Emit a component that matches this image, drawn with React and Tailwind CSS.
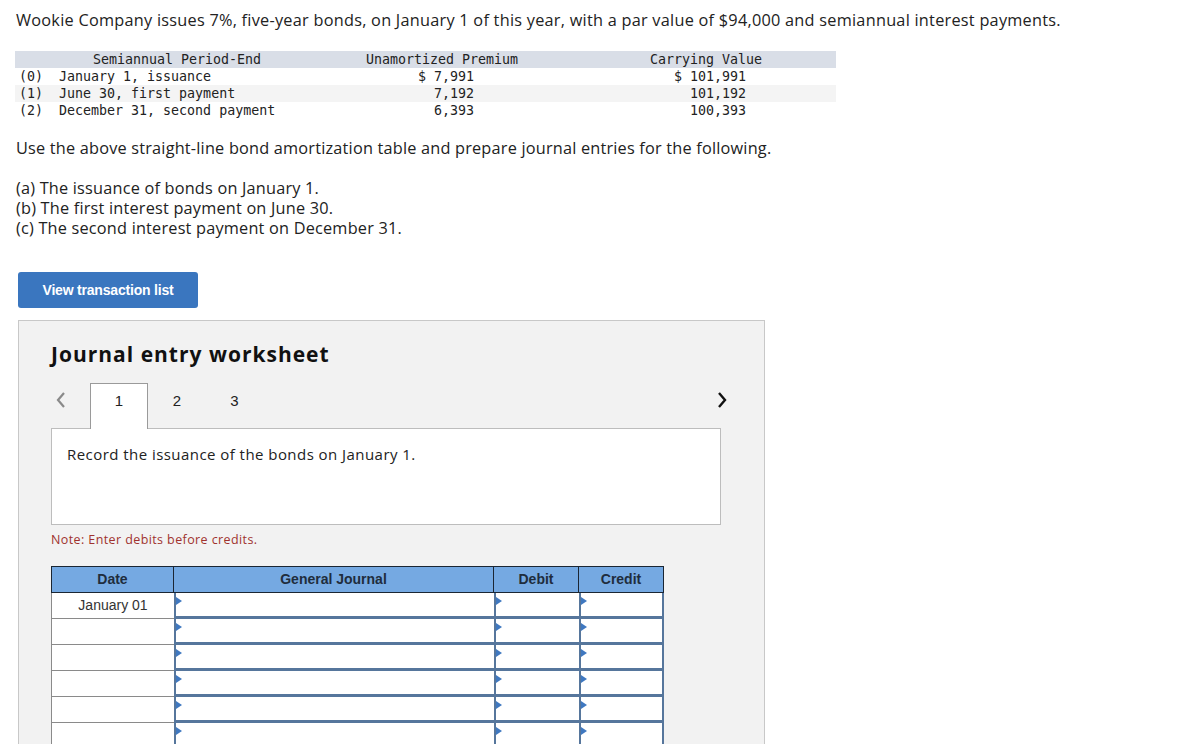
import React from "react";

const amortRows = [
  { label: "(0)  January 1, issuance", premium: "$ 7,991", carrying: "$ 101,991", bg: "bg-white" },
  { label: "(1)  June 30, first payment", premium: "7,192", carrying: "101,192", bg: "bg-[#f4f4f4]" },
  { label: "(2)  December 31, second payment", premium: "6,393", carrying: "100,393", bg: "bg-white" },
];

function Marker() {
  return (
    <span className="absolute left-0 top-[4px] w-0 h-0 border-y-[4px] border-y-transparent border-l-[6px] border-l-[#3f78c0]" />
  );
}

function InputCell({ width, last }) {
  return (
    <div
      className={`relative ${width} h-full bg-white border-l-2 border-b-[3px] border-[#56769c] ${
        last ? "border-r-2" : ""
      }`}
    >
      <Marker />
    </div>
  );
}

export default function App() {
  const rows = ["January 01", "", "", "", "", "", ""];

  return (
    <div className="min-h-[900px] bg-white pl-[16px] pt-[8px] text-[#222]">
      <p className="font-['Open_Sans',sans-serif] text-[16.3px] tracking-[0.25px] leading-[24px]">
        Wookie Company issues 7%, five-year bonds, on January 1 of this year, with a par value of
        $94,000 and semiannual interest payments.
      </p>

      {/* amortization table */}
      <div className="mt-[19px] -ml-px w-[821px] font-['DejaVu_Sans_Mono',monospace] text-[13.3px] leading-[17px] text-[#222] whitespace-pre">
        <div className="flex h-[17px] bg-[#d9dee7]">
          <div className="w-[324px] text-center">Semiannual Period-End</div>
          <div className="w-[206px] text-center">Unamortized Premium</div>
          <div className="w-[291px] pl-[105px]">Carrying Value</div>
        </div>
        {amortRows.map((r, i) => (
          <div key={i} className={`flex h-[17px] ${r.bg}`}>
            <div className="w-[324px] pl-[4px]">{r.label}</div>
            <div className="w-[206px] pr-[71px] text-right">{r.premium}</div>
            <div className="w-[291px] pr-[90px] text-right">{r.carrying}</div>
          </div>
        ))}
      </div>

      <p className="mt-[19px] font-['Open_Sans',sans-serif] text-[16.3px] tracking-[0.2px] leading-[20px]">
        Use the above straight-line bond amortization table and prepare journal entries for the
        following.
      </p>

      <div className="mt-[20px] font-['Open_Sans',sans-serif] text-[16.3px] tracking-[0.2px] leading-[20px]">
        <p>(a) The issuance of bonds on January 1.</p>
        <p>(b) The first interest payment on June 30.</p>
        <p>(c) The second interest payment on December 31.</p>
      </div>

      <button className="mt-[34px] ml-[2px] flex h-[36px] w-[180px] items-center justify-center rounded-[3px] bg-[#3a76bf] font-['Liberation_Sans',sans-serif] text-[14px] font-bold tracking-[-0.2px] text-white">
        View transaction list
      </button>

      {/* worksheet panel */}
      <div className="mt-[12px] ml-[2px] w-[747px] border border-[#c8c8c8] bg-[#f2f2f2] pl-[32px] pr-[20px] pt-[21px] pb-[40px]">
        <h2 className="font-['Open_Sans',sans-serif] text-[21px] tracking-[1px] font-bold leading-[24px] text-[#111]">
          Journal entry worksheet
        </h2>

        <div className="mt-[17px] flex h-[46px] items-start font-['Liberation_Sans',sans-serif] text-[15px] text-[#222]">
          <div className="flex h-[34px] w-[39px] items-center pl-[4px]">
            <svg width="12" height="18" viewBox="0 0 12 18">
              <path d="M9 2 L3 9 L9 16" fill="none" stroke="#8a8a8a" strokeWidth="2.2" />
            </svg>
          </div>
          <div className="relative z-10 h-[46px] w-[58px] border-x border-t border-[#9a9a9a] bg-white pt-[7px] text-center leading-[20px]">
            1
          </div>
          <div className="w-[58px] pt-[8px] text-center leading-[20px]">2</div>
          <div className="w-[57px] pt-[8px] text-center leading-[20px]">3</div>
          <div className="ml-auto flex h-[34px] w-[20px] items-center mr-[8px]">
            <svg width="12" height="18" viewBox="0 0 12 18">
              <path d="M3 2 L9 9 L3 16" fill="none" stroke="#111" strokeWidth="2.4" />
            </svg>
          </div>
        </div>

        <div className="-mt-px h-[97px] w-[670px] border border-[#bdbdbd] bg-white pl-[15px] pt-[15px] font-['Open_Sans',sans-serif] text-[15px] tracking-[0.45px] leading-[20px] text-[#222]">
          Record the issuance of the bonds on January 1.
        </div>

        <p className="mt-[7px] font-['Open_Sans',sans-serif] text-[12.5px] tracking-[0.4px] leading-[16px] text-[#a0322e]">
          Note: Enter debits before credits.
        </p>

        {/* journal table */}
        <div className="mt-[18px] w-[613px] font-['Liberation_Sans',sans-serif] text-[14px]">
          <div className="flex h-[27px] border border-[#1b2633] bg-[#75a9e2] font-bold text-[#1f2d3d]">
            <div className="flex w-[122px] items-center justify-center border-r border-[#1b2633]">Date</div>
            <div className="flex w-[320px] items-center justify-center border-r border-[#1b2633]">General Journal</div>
            <div className="flex w-[85px] items-center justify-center border-r border-[#1b2633]">Debit</div>
            <div className="flex flex-1 items-center justify-center">Credit</div>
          </div>
          {rows.map((d, i) => (
            <div key={i} className="flex h-[26px]">
              <div className="flex w-[123px] items-center justify-center border-b border-l border-[#8a8a8a] bg-white text-[#333]">
                {d}
              </div>
              <InputCell width="w-[320px]" />
              <InputCell width="w-[85px]" />
              <InputCell width="w-[85px]" last />
            </div>
          ))}
        </div>
      </div>
    </div>
  );
}
